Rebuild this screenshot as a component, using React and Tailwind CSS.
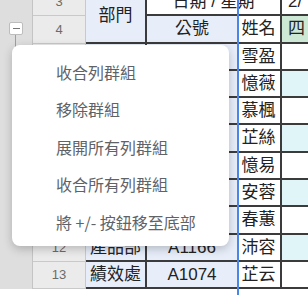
import React from 'react';

const DATA = [
  { n: 5, dept: '', id: '', name: '雪盈' },
  { n: 6, dept: '', id: '', name: '憶薇' },
  { n: 7, dept: '', id: '', name: '慕楓' },
  { n: 8, dept: '', id: '', name: '芷絲' },
  { n: 9, dept: '', id: '', name: '憶易' },
  { n: 10, dept: '', id: '', name: '安蓉' },
  { n: 11, dept: '', id: '', name: '春蕙' },
  { n: 12, dept: '產品部', id: 'A1166', name: '沛容' },
  { n: 13, dept: '績效處', id: 'A1074', name: '芷云' },
];

const MENU = ['收合列群組', '移除群組', '展開所有列群組', '收合所有列群組', '將 +/- 按鈕移至底部'];

const head = 'flex items-center justify-center bg-[#ebebeb] border-b border-r border-[#c9c9c9] text-[13px] text-[#6b6b6b]';
const cell = 'flex items-center justify-center border-b-2 border-[#3b3b3b] text-[17px] text-[#222] whitespace-nowrap';

const App = () => {
  return (
    <div className="relative w-[308px] h-[295px] overflow-hidden bg-white font-['Liberation_Sans','Noto_Sans_CJK_TC',sans-serif]">
      <div className="mt-[-11px] grid grid-cols-[33px_53px_61px_90px_45px_1fr] grid-rows-[repeat(11,27.3px)]">
        <div className="row-span-11 bg-[#dedede] border-r border-[#c4c4c4]" />

        {/* row 3 */}
        <div className={head}>3</div>
        <div className={`${cell} row-span-2 bg-[#e7eefa] border-r-2`}>部門</div>
        <div className={`${cell} col-span-2 bg-white border-r-2`}>日期 / 星期</div>
        <div className={`${cell} justify-start pl-[6px] bg-white`}>2/</div>

        {/* row 4 */}
        <div className={head}>4</div>
        <div className={`${cell} bg-[#e7eefa]`}>公號</div>
        <div className={`${cell} bg-white border-r-2`}>姓名</div>
        <div className={`${cell} justify-start pl-[6px] bg-[#cde8d5]`}>四</div>

        {DATA.map(r => (
          <React.Fragment key={r.n}>
            <div className={head}>{r.n}</div>
            <div className={`${cell} bg-[#e7eefa] border-r-2`}>{r.dept}</div>
            <div className={`${cell} bg-[#e7eefa]`}>{r.id}</div>
            <div className={`${cell} bg-white border-r-2`}>{r.name}</div>
            <div className={`${cell} ${r.n % 2 === 0 ? 'bg-[#e0f5f8]' : 'bg-white'}`} />
          </React.Fragment>
        ))}
      </div>

      {/* column selection line */}
      <div className="absolute left-[237px] top-0 w-[2px] h-full bg-[#4a86e8]" />

      {/* group toggle */}
      <div className="absolute left-[9px] top-[22px] w-[14px] h-[13px] flex items-center justify-center bg-white border border-[#bdbdbd] rounded-[2px]">
        <div className="w-[7px] h-[1.5px] bg-[#777]" />
      </div>
      <div className="absolute left-[15px] top-[35px] w-px h-[12px] bg-[#9e9e9e]" />

      {/* context menu */}
      <div className="absolute left-[12px] top-[45px] w-[217px] rounded-lg bg-white pt-[8px] pb-[5px] shadow-[0_3px_10px_rgba(0,0,0,0.22)] font-['Noto_Sans_CJK_TC',sans-serif]">
        {MENU.map(label => (
          <div key={label} className="h-[37.5px] flex items-center pl-[44px] text-[16px] text-[#5f6368] whitespace-nowrap">
            {label}
          </div>
        ))}
      </div>
    </div>
  );
};

export default App;
